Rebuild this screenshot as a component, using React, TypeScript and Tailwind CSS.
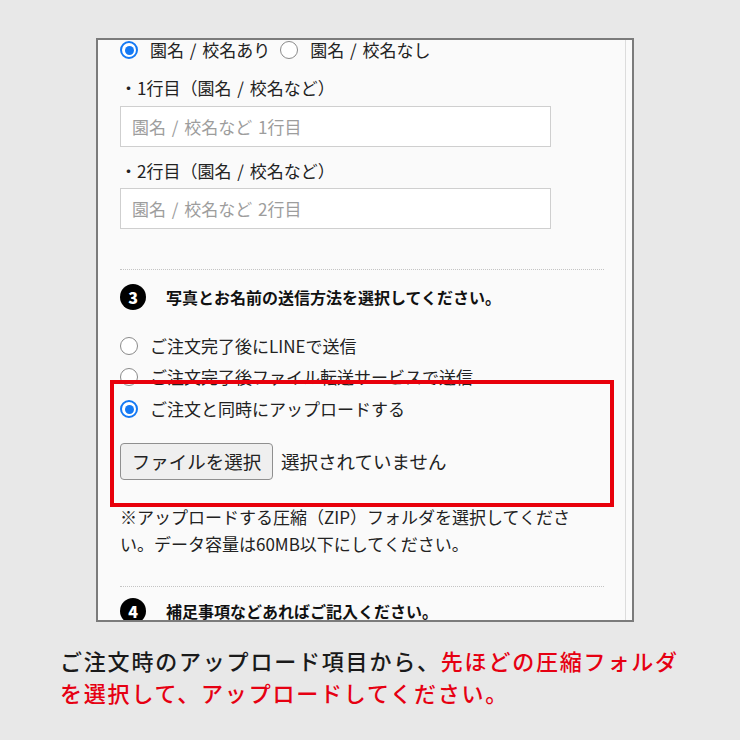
const font = { fontFamily: '"Noto Sans CJK JP", "Noto Sans", sans-serif' }

function Radio({ checked }: { checked?: boolean }) {
  return checked ? (
    <span className="flex h-[18px] w-[18px] shrink-0 items-center justify-center rounded-full border-2 border-[#1479f4] bg-white">
      <span className="h-[9px] w-[9px] rounded-full bg-[#1479f4]" />
    </span>
  ) : (
    <span className="block h-[18px] w-[18px] shrink-0 rounded-full border border-[#8a8a8a] bg-white" />
  )
}

function Step({ n, children }: { n: number; children: React.ReactNode }) {
  return (
    <div className="flex h-[26px] items-center gap-[20px]">
      <span className="flex h-[26px] w-[26px] shrink-0 items-center justify-center rounded-full bg-black text-[16px] font-black leading-none text-white">{n}</span>
      <span className="text-[16px] font-bold text-[#111]">{children}</span>
    </div>
  )
}

export default function App() {
  return (
    <div style={font} className="h-[740px] w-[740px] overflow-hidden bg-[#e8e8e8] text-[#222]">
      <div className="ml-[96px] mt-[38px] flex h-[584px] w-[538px] overflow-hidden border-2 border-[#7b7b7b] bg-[#fafafa]">
        <div className="relative flex-1 pl-[22px] pr-[21px] text-[17px] [word-spacing:2px]">
          <div className="flex h-[20px] items-center">
            <Radio checked />
            <span className="ml-[12px]">園名 / 校名あり</span>
            <span className="ml-[10px] flex"><Radio /></span>
            <span className="ml-[12px]">園名 / 校名なし</span>
          </div>

          <p className="mt-[15px] h-[26px] leading-[26px]">・1行目（園名 / 校名など）</p>
          <div className="mt-[5px] flex h-[41px] w-[431px] items-center border border-[#cfcfcf] bg-white pl-[11px] text-[#9d9d9d]">園名 / 校名など 1行目</div>

          <p className="mt-[11px] h-[26px] leading-[26px]">・2行目（園名 / 校名など）</p>
          <div className="mt-[4px] flex h-[41px] w-[431px] items-center border border-[#cfcfcf] bg-white pl-[11px] text-[#9d9d9d]">園名 / 校名など 2行目</div>

          <div className="mt-[40px] border-t border-dotted border-[#c4c4c4]" />

          <div className="mt-[14px]">
            <Step n={3}>写真とお名前の送信方法を選択してください。</Step>
          </div>

          <div className="mt-[23px] flex h-[26px] items-center gap-[12px]">
            <Radio />
            <span>ご注文完了後にLINEで送信</span>
          </div>
          <div className="mt-[5px] flex h-[26px] items-center gap-[12px]">
            <Radio />
            <span>ご注文完了後ファイル転送サービスで送信</span>
          </div>
          <div className="mt-[6px] flex h-[26px] items-center gap-[12px]">
            <Radio checked />
            <span>ご注文と同時にアップロードする</span>
          </div>

          <div className="mt-[21px] flex items-center gap-[8px] text-[18.5px]">
            <span className="flex h-[37px] w-[153px] items-center justify-center rounded-[4px] border border-[#8f8f8f] bg-[#efefef]">ファイルを選択</span>
            <span>選択されていません</span>
          </div>

          <p className="mt-[23px] leading-[27px]">
            ※アップロードする圧縮（ZIP）フォルダを選択してくださ<br />い。データ容量は60MB以下にしてください。
          </p>

          <div className="mt-[29px] border-t border-dotted border-[#c4c4c4]" />

          <div className="mt-[11px]">
            <Step n={4}>補足事項などあればご記入ください。</Step>
          </div>

          <div className="absolute left-[12px] top-[340px] h-[127px] w-[504px] border-4 border-[#e8000b]" />
        </div>
        <div className="w-[7px] shrink-0 border-l border-[#dcdcdc] bg-[#fafafa]" />
      </div>

      <p className="ml-[60px] mt-[22px] text-[22px] font-medium leading-[32px] tracking-[1.8px] text-[#1a1a1a]">
        ご注文時のアップロード項目から、<span className="text-[#e60012]">先ほどの圧縮フォルダ<br />を選択して、アップロードしてください。</span>
      </p>
    </div>
  )
}
